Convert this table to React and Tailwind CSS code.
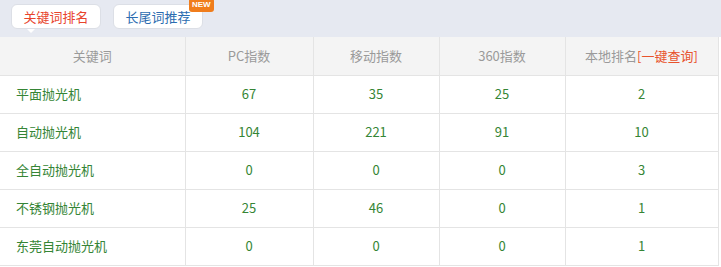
const rows = [
  ["平面抛光机", 67, 35, 25, 2],
  ["自动抛光机", 104, 221, 91, 10],
  ["全自动抛光机", 0, 0, 0, 3],
  ["不锈钢抛光机", 25, 46, 0, 1],
  ["东莞自动抛光机", 0, 0, 0, 1],
];

function App() {
  return (
    <div className="w-[721px] h-[267px] bg-white overflow-hidden" style={{ fontFamily: '"Microsoft YaHei", "Noto Sans CJK SC", sans-serif' }}>
      <div className="h-[37px] bg-[#e6e9f1] flex items-start gap-[12px] pl-[11px] pt-[4px]">
        <div className="relative">
          <div className="h-[25px] w-[90px] bg-white border border-[#dcdfe6] rounded-[6px] flex items-center justify-center text-[13px] text-[#e8432c]">关键词排名</div>
          <div className="absolute left-[16px] top-[25px] w-0 h-0 border-l-[4px] border-r-[4px] border-t-[4px] border-l-transparent border-r-transparent border-t-white"></div>
        </div>
        <div className="relative">
          <div className="h-[25px] w-[90px] bg-white border border-[#dcdfe6] rounded-[6px] flex items-center justify-center text-[13px] text-[#2b6cb0]">长尾词推荐</div>
          <div className="absolute left-[76px] top-[-6px] h-[14px] px-[3px] bg-[#f07d1c] rounded-[3px] text-white text-[8px] leading-[14px] font-bold" style={{ fontFamily: '"Liberation Sans", sans-serif' }}>NEW</div>
        </div>
      </div>
      <table className="w-[718px] border-collapse text-[13px] table-fixed">
        <colgroup>
          <col className="w-[185px]" />
          <col className="w-[128px]" />
          <col className="w-[126px]" />
          <col className="w-[126px]" />
          <col className="w-[153px]" />
        </colgroup>
        <thead>
          <tr className="h-[38px] bg-[#f4f4f4] text-[#9a9a9a]">
            <th className="font-normal border border-[#e4e4e4] border-t-0 border-l-0">关键词</th>
            <th className="font-normal border border-[#e4e4e4] border-t-0">PC指数</th>
            <th className="font-normal border border-[#e4e4e4] border-t-0">移动指数</th>
            <th className="font-normal border border-[#e4e4e4] border-t-0">360指数</th>
            <th className="font-normal border border-[#e4e4e4] border-t-0">
              本地排名<span className="text-[#e8532c]">[一键查询]</span>
            </th>
          </tr>
        </thead>
        <tbody className="text-[#358535]">
          {rows.map((r) => (
            <tr key={r[0]} className="h-[38px]">
              <td className="border border-[#e4e4e4] border-l-0 pl-[16px]">{r[0]}</td>
              <td className="border border-[#e4e4e4] text-center">{r[1]}</td>
              <td className="border border-[#e4e4e4] text-center">{r[2]}</td>
              <td className="border border-[#e4e4e4] text-center">{r[3]}</td>
              <td className="border border-[#e4e4e4] text-center">{r[4]}</td>
            </tr>
          ))}
        </tbody>
      </table>
    </div>
  );
}

export default App;
